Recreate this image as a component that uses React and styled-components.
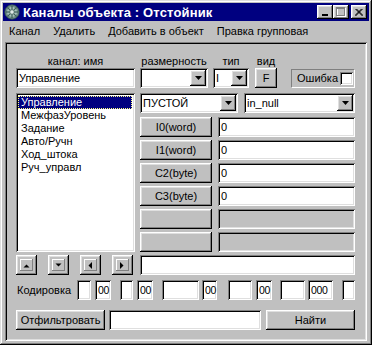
import React from 'react';
import styled, { createGlobalStyle } from 'styled-components';

const GlobalStyle = createGlobalStyle`
  html, body { margin: 0; padding: 0; background: #c0c0c0; }
  body { font-family: "Liberation Sans", Arial, sans-serif; font-size: 11px; color: #000; }
  * { box-sizing: border-box; }
`;

const raised = `box-shadow: inset -1px -1px #000, inset 1px 1px #fff, inset -2px -2px #808080, inset 2px 2px #dfdfdf;`;
const sunken = `box-shadow: inset 1px 1px #808080, inset -1px -1px #fff, inset 2px 2px #000, inset -2px -2px #dfdfdf;`;

const Win = styled.div`
  width: 372px;
  height: 345px;
  padding: 3px;
  background: #c0c0c0;
  display: flex;
  flex-direction: column;
  box-shadow: inset -1px -1px #000, inset 1px 1px #dfdfdf, inset -2px -2px #808080, inset 2px 2px #fff;
`;

const TitleBar = styled.div`
  height: 18px;
  flex: none;
  background: #000080;
  display: flex;
  align-items: center;
  padding: 0 2px 0 1px;
  color: #fff;
  font-weight: bold;
  font-size: 13px;
`;

const TitleText = styled.div`
  flex: 1;
  margin-left: 3px;
  white-space: nowrap;
  letter-spacing: 0.15px;
`;

const CapBtn = styled.div`
  width: 16px;
  height: 14px;
  flex: none;
  background: #c0c0c0;
  ${raised}
  display: flex;
  align-items: center;
  justify-content: center;
  margin-left: ${p => p.$gap || 0}px;
`;

const MenuBar = styled.div`
  height: 19px;
  flex: none;
  display: flex;
  align-items: center;
  gap: 1px;
`;

const MenuItem = styled.span`
  padding: 0 6px;
  white-space: nowrap;
`;

const Panel = styled.div`
  flex: 1;
  margin: 2px 2px 1px 2px;
  ${sunken}
  padding: 13px 12px 11px 11px;
  display: flex;
  flex-direction: column;
`;

const Row = styled.div`
  display: flex;
  align-items: center;
  flex: none;
  height: ${p => p.$h || 20}px;
  margin-top: ${p => p.$mt || 0}px;
`;

const Label = styled.div`
  width: ${p => p.$w}px;
  margin-left: ${p => p.$ml || 0}px;
  flex: none;
  text-align: ${p => p.$align || 'center'};
  padding-left: ${p => p.$pl || 0}px;
  line-height: 13px;
  white-space: nowrap;
`;

const Field = styled.div`
  width: ${p => p.$w}px;
  height: 20px;
  flex: none;
  margin-left: ${p => p.$ml || 0}px;
  background: ${p => (p.$disabled ? '#c0c0c0' : '#fff')};
  ${sunken}
  display: flex;
  align-items: center;
  padding: 2px;
`;

const FieldText = styled.span`
  flex: 1;
  padding-left: 1px;
  line-height: 16px;
  white-space: nowrap;
  overflow: hidden;
`;

const CodeText = styled.span`
  flex: 1;
  font-size: 10.5px;
  letter-spacing: -0.4px;
  padding-left: 1px;
  line-height: 16px;
  white-space: nowrap;
  overflow: visible;
`;

const DropBtn = styled.div`
  width: 16px;
  height: 16px;
  flex: none;
  background: #c0c0c0;
  ${raised}
  display: flex;
  align-items: center;
  justify-content: center;
`;

const Btn = styled.div`
  width: ${p => p.$w}px;
  height: 20px;
  flex: none;
  margin-left: ${p => p.$ml || 0}px;
  background: #c0c0c0;
  ${raised}
  display: flex;
  align-items: center;
  justify-content: center;
  white-space: nowrap;
`;

const ErrorBox = styled.div`
  width: 64px;
  height: 19px;
  flex: none;
  margin-left: 14px;
  border-top: 1px solid #808080;
  border-left: 1px solid #808080;
  border-right: 1px solid #fff;
  border-bottom: 1px solid #fff;
  display: flex;
  align-items: center;
  justify-content: space-between;
  padding: 0 1px 0 5px;
`;

const Check = styled.div`
  width: 13px;
  height: 13px;
  background: #fff;
  ${sunken}
`;

const Main = styled.div`
  display: flex;
  flex: none;
  height: 159px;
  margin-top: 5px;
`;

const ListBox = styled.div`
  width: 119px;
  flex: none;
  background: #fff;
  ${sunken}
  padding: 3px 3px 2px 2px;
  display: flex;
  flex-direction: column;
`;

const ListItem = styled.div`
  height: 13px;
  line-height: 13px;
  padding-left: 3px;
  white-space: nowrap;
  background: ${p => (p.$sel ? '#000080' : 'transparent')};
  color: ${p => (p.$sel ? '#fff' : '#000')};
  outline: ${p => (p.$sel ? '1px dotted #ffff80' : 'none')};
  outline-offset: -1px;
`;

const RightCol = styled.div`
  width: 215px;
  margin-left: 5px;
  flex: none;
  display: flex;
  flex-direction: column;
`;

const NavGroup = styled.div`
  width: 119px;
  flex: none;
  display: flex;
  gap: 11px;
`;

const NavBtn = styled.div`
  width: 21px;
  height: 20px;
  background: #c0c0c0;
  ${raised}
  display: flex;
  align-items: center;
  justify-content: center;
`;

const NavInner = styled.div`
  width: 13px;
  height: 12px;
  box-shadow: inset -1px -1px #808080, inset 1px 1px #fff;
  display: flex;
  align-items: center;
  justify-content: center;
`;

const Tri = ({ dir }) => {
  const pts = {
    up: '0.5,4.5 3.5,1.5 6.5,4.5',
    down: '0.5,0.5 6.5,0.5 3.5,3.5',
    left: '4,0 4,7 0.5,3.5',
    right: '0,0 0,7 3.5,3.5',
  }[dir];
  const horiz = dir === 'left' || dir === 'right';
  return (
    <svg width={horiz ? 5 : 7} height={horiz ? 7 : 5} viewBox={horiz ? '0 0 5 7' : '0 0 7 5'}>
      <polygon points={pts} fill="#000" />
    </svg>
  );
};

const DownArrow = () => (
  <svg width="7" height="4" viewBox="0 0 7 4">
    <polygon points="0,0 7,0 3.5,4" fill="#000" />
  </svg>
);

const Combo = ({ w, ml, text }) => (
  <Field $w={w} $ml={ml}>
    <FieldText>{text}</FieldText>
    <DropBtn>
      <DownArrow />
    </DropBtn>
  </Field>
);

const AppIcon = () => (
  <svg width="16" height="16" viewBox="0 0 16 16">
    <circle cx="8" cy="8" r="7.2" fill="#6f8f8a" stroke="#2f4f4a" strokeWidth="0.8" />
    <circle cx="8" cy="8" r="5" fill="#a9c4bd" />
    {[0, 45, 90, 135].map(a => (
      <line
        key={a}
        x1="8"
        y1="1.5"
        x2="8"
        y2="14.5"
        stroke="#3d5c57"
        strokeWidth="1.2"
        transform={`rotate(${a} 8 8)`}
      />
    ))}
    <circle cx="8" cy="8" r="2.2" fill="#dfe9e6" stroke="#3d5c57" strokeWidth="0.6" />
  </svg>
);

const listItems = ['Управление', 'МежфазУровень', 'Задание', 'Авто/Ручн', 'Ход_штока', 'Руч_управл'];

const channelRows = [
  { btn: 'I0(word)', val: '0' },
  { btn: 'I1(word)', val: '0' },
  { btn: 'C2(byte)', val: '0' },
  { btn: 'C3(byte)', val: '0' },
  { btn: '', val: '', disabled: true },
  { btn: '', val: '', disabled: true },
];

const codeBoxes = [
  { w: 14, ml: 0, t: '' },
  { w: 16, ml: 4, t: '00' },
  { w: 13, ml: 9, t: '' },
  { w: 16, ml: 4, t: '00' },
  { w: 37, ml: 9, t: '' },
  { w: 15, ml: 3, t: '00' },
  { w: 24, ml: 11, t: '' },
  { w: 16, ml: 4, t: '00' },
  { w: 25, ml: 8, t: '' },
  { w: 25, ml: 3, t: '000' },
  { w: 13, ml: 9, t: '' },
];

export default function App() {
  return (
    <>
      <GlobalStyle />
      <Win>
        <TitleBar>
          <AppIcon />
          <TitleText>Каналы объекта : Отстойник</TitleText>
          <CapBtn>
            <svg width="8" height="10" viewBox="0 0 8 10">
              <rect x="1" y="7" width="6" height="2" fill="#000" />
            </svg>
          </CapBtn>
          <CapBtn>
            <svg width="10" height="10" viewBox="0 0 10 10">
              <rect x="1.5" y="1.5" width="8" height="8" fill="none" stroke="#fff" />
              <rect x="1" y="1" width="2" height="1" fill="#fff" />
              <rect x="0.5" y="0.5" width="8" height="8" fill="none" stroke="#808080" />
              <rect x="0" y="1" width="9" height="1" fill="#808080" />
            </svg>
          </CapBtn>
          <CapBtn $gap={2}>
            <svg width="8" height="7" viewBox="0 0 8 7">
              <path d="M0.5 0 L7.5 7 M1.5 0 L8 6.5 M7.5 0 L0.5 7 M6.5 0 L0 6.5" stroke="#000" strokeWidth="1" />
            </svg>
          </CapBtn>
        </TitleBar>
        <MenuBar>
          <MenuItem>Канал</MenuItem>
          <MenuItem>Удалить</MenuItem>
          <MenuItem>Добавить в объект</MenuItem>
          <MenuItem>Правка групповая</MenuItem>
        </MenuBar>
        <Panel>
          <Row $h={13}>
            <Label $w={119}>канал: имя</Label>
            <Label $w={68} $ml={5}>размерность</Label>
            <Label $w={36} $ml={5}>тип</Label>
            <Label $w={22} $ml={6}>вид</Label>
          </Row>
          <Row>
            <Field $w={119}>
              <FieldText>Управление</FieldText>
            </Field>
            <Combo w={68} ml={5} text="" />
            <Combo w={36} ml={5} text="I" />
            <Btn $w={22} $ml={6}>F</Btn>
            <ErrorBox>
              <span>Ошибка</span>
              <Check />
            </ErrorBox>
          </Row>
          <Main>
            <ListBox>
              {listItems.map((it, i) => (
                <ListItem key={it} $sel={i === 0}>{it}</ListItem>
              ))}
            </ListBox>
            <RightCol>
              <Row>
                <Combo w={98} text="ПУСТОЙ" />
                <Combo w={111} ml={6} text="in_null" />
              </Row>
              {channelRows.map((r, i) => (
                <Row key={i} $mt={i === 0 ? 4 : 3}>
                  <Btn $w={72}>{r.btn}</Btn>
                  <Field $w={137} $ml={6} $disabled={r.disabled}>
                    <FieldText>{r.val}</FieldText>
                  </Field>
                </Row>
              ))}
            </RightCol>
          </Main>
          <Row $mt={3}>
            <NavGroup>
              {['up', 'down', 'left', 'right'].map(d => (
                <NavBtn key={d}>
                  <NavInner>
                    <Tri dir={d} />
                  </NavInner>
                </NavBtn>
              ))}
            </NavGroup>
            <Field $w={215} $ml={5} />
          </Row>
          <Row $mt={5}>
            <Label $w={61} $align="left" $pl={1}>Кодировка</Label>
            {codeBoxes.map((b, i) => (
              <Field key={i} $w={b.w} $ml={b.ml}>
                <CodeText>{b.t}</CodeText>
              </Field>
            ))}
          </Row>
          <Row $mt={10}>
            <Btn $w={89}>Отфильтровать</Btn>
            <Field $w={152} $ml={4} />
            <Btn $w={89} $ml={5}>Найти</Btn>
          </Row>
        </Panel>
      </Win>
    </>
  );
}
